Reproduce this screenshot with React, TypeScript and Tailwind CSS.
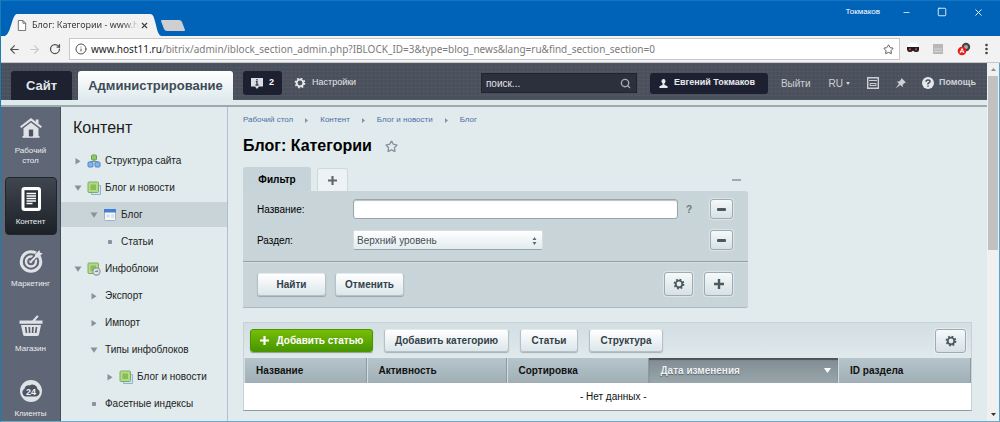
import React from "react";
import { Minus, Square, X, Star, RotateCw, ArrowLeft, ArrowRight, Info, Search } from "lucide-react";

type MenuItem = {
  label: string;
  indent: string;
  marker: "closed" | "open" | "dot";
  icon?: "site" | "block" | "page" | "gear";
  active?: boolean;
};

const menu: MenuItem[] = [
  { label: "Структура сайта", indent: "pl-3", marker: "closed", icon: "site" },
  { label: "Блог и новости", indent: "pl-3", marker: "open", icon: "block" },
  { label: "Блог", indent: "pl-7", marker: "open", icon: "page", active: true },
  { label: "Статьи", indent: "pl-11", marker: "dot" },
  { label: "Инфоблоки", indent: "pl-3", marker: "open", icon: "gear" },
  { label: "Экспорт", indent: "pl-7", marker: "closed" },
  { label: "Импорт", indent: "pl-7", marker: "closed" },
  { label: "Типы инфоблоков", indent: "pl-7", marker: "open" },
  { label: "Блог и новости", indent: "pl-11", marker: "closed", icon: "block" },
  { label: "Фасетные индексы", indent: "pl-7", marker: "dot" },
];

const lightButton =
  "flex items-center justify-center rounded-[3px] border border-[#b4c2c8] border-t-[#e3eaed] bg-linear-to-b from-white to-[#dce6ea] font-bold text-[#32414a] shadow-[0_1px_1px_rgba(80,100,110,0.4)]";
const iconButton =
  "flex items-center justify-center rounded-[3px] border border-[#9dacb2] bg-linear-to-b from-[#f6f9fa] to-[#d7e1e5] text-[#4b5960] shadow-[0_0_1px_1px_rgba(255,255,255,0.4)]";

function Marker({ kind }: { kind: MenuItem["marker"] }) {
  return (
    <svg viewBox="0 0 10 10" className="size-[10px] shrink-0" fill="#85929f" aria-hidden="true">
      {kind === "closed" && <path d="M2.5 2v6.5l5-3.2z" />}
      {kind === "open" && <path d="M1.5 2.5h7L5 7.8z" />}
      {kind === "dot" && <rect x="3" y="3" width="4" height="4" rx="1" />}
    </svg>
  );
}

function GreenBlock() {
  return (
    <>
      <path d="M4.500 4.500h9v9h-9z" fill="#d4e4f7" stroke="#8fb2dd" />
      <rect x="1" y="1" width="10.500" height="10.500" rx="1" fill="#b4d98a" stroke="#7fae5a" />
      <rect x="3.500" y="3.500" width="5.500" height="5.500" fill="#84c052" />
    </>
  );
}

function MenuIcon({ kind }: { kind: NonNullable<MenuItem["icon"]> }) {
  return (
    <svg viewBox="0 0 14 14" className="size-[14px] shrink-0" aria-hidden="true">
      {kind === "site" && (
        <>
          <path d="M7 5v3M3.500 10V7.500h7V10" fill="none" stroke="#7d93a8" />
          <rect x="4.500" y="1" width="5" height="5" rx="1" fill="#93c668" stroke="#69a142" />
          <rect x="1" y="8" width="5" height="5" rx="1" fill="#86b3ea" stroke="#4f83c9" />
          <rect x="8" y="8" width="5" height="5" rx="1" fill="#86b3ea" stroke="#4f83c9" />
        </>
      )}
      {kind === "block" && <GreenBlock />}
      {kind === "page" && (
        <>
          <rect x="1.500" y="1.500" width="11" height="11" rx="1" fill="#f5f7fa" stroke="#9fb0c4" />
          <path d="M1 1h12v3.500H1z" fill="#3f80d8" />
          <path d="M3.500 6.500h3v3h-3z" fill="#d3dae2" />
          <path d="M8 7h3M8 9h3" stroke="#c7d0da" />
        </>
      )}
      {kind === "gear" && (
        <>
          <rect x="1" y="1" width="10.500" height="10.500" rx="1" fill="#b4d98a" stroke="#7fae5a" />
          <rect x="3.500" y="3.500" width="5.500" height="5.500" fill="#84c052" />
          <circle cx="9.500" cy="9.500" r="3.600" fill="#dde2e6" stroke="#8e9ba5" strokeWidth="1.200" />
          <path d="M8 9.500h3M9.500 9.500l1-1.500" stroke="#7a8791" fill="none" />
        </>
      )}
    </svg>
  );
}

function Gear({ className }: { className: string }) {
  return (
    <svg viewBox="0 0 14 14" className={className} fill="none" stroke="currentColor" aria-hidden="true">
      <circle cx="7" cy="7" r="3.900" strokeWidth="2.200" />
      <circle cx="7" cy="7" r="5.400" strokeWidth="1.800" strokeDasharray="2.100 2.141" />
    </svg>
  );
}

function Plus({ className }: { className: string }) {
  return (
    <svg viewBox="0 0 10 10" className={className} stroke="currentColor" strokeWidth="2.400" aria-hidden="true">
      <path d="M5 0v10M0 5h10" />
    </svg>
  );
}

function MinusBar() {
  return (
    <svg viewBox="0 0 9 3" className="h-[3px] w-[9px]" aria-hidden="true">
      <rect width="9" height="3" rx="1" fill="currentColor" />
    </svg>
  );
}

function NavIcon({ kind }: { kind: string }) {
  return (
    <svg viewBox="0 0 24 24" className="size-[24px]" fill="#dfe2e6" aria-hidden="true">
      {kind === "home" && (
        <>
          <path d="M12 2L1 10.500l1.300 1.600L12 4.800l9.700 7.300 1.300-1.600-3.500-2.700V3.500h-2.700v2.200z" />
          <path d="M4.500 12.200L12 6.500l7.500 5.700V21h-5.300v-7.500H9.800V21H4.500z" />
          <path d="M3.500 20h17v1.800h-17z" />
          <path d="M10.300 14h3.400v6.500h-3.400z" fill="#4a5060" />
        </>
      )}
      {kind === "content" && (
        <>
          <rect x="2.500" y="0" width="19.500" height="24" rx="3" fill="#fff" />
          <rect x="5.500" y="3.200" width="13.500" height="17.600" fill="#2b3139" />
          <path d="M7.500 6.500h9.500M7.500 9h9.500M7.500 11.500h9.500M7.500 14h9.500M7.500 16.500h6" stroke="#fff" strokeWidth="1.400" />
        </>
      )}
      {kind === "target" && (
        <>
          <circle cx="12" cy="12.500" r="9.800" fill="none" stroke="#dfe2e6" strokeWidth="3" />
          <circle cx="12" cy="12.500" r="5" fill="none" stroke="#dfe2e6" strokeWidth="2.400" />
          <circle cx="12" cy="12.500" r="1.800" />
          <path d="M12 12.500L20 4" stroke="#596070" strokeWidth="4.500" />
          <path d="M12 12.500L21 3.500" stroke="#dfe2e6" strokeWidth="2" />
          <path d="M16 5.500L20.500 1l.5 2.800 2.700.5-4.500 4.500-3-.5z" />
        </>
      )}
      {kind === "basket" && (
        <>
          <path d="M.5 6.500h12.800L18 1.200l1.700 1.200-3.500 4.100h7.300v3.300H.5z" />
          <path d="M2 11h20l-2 9.500q-.3 1.500-2 1.500H6q-1.700 0-2-1.500z" />
          <path d="M6.700 13l.8 6M10.300 13l.3 6M13.900 13l-.3 6M17.500 13l-.8 6" stroke="#596070" strokeWidth="1.700" />
        </>
      )}
      {kind === "clients" && (
        <>
          <circle cx="12" cy="12" r="11" />
          <path d="M7 17.500a4 4 0 0 1-1.500-7.500 4 4 0 0 1 5-3.500 5 5 0 0 1 8 3.500 4 4 0 0 1-1 7.500z" fill="#4d5462" />
          <text x="12" y="15.500" textAnchor="middle" fontSize="9" fontWeight="700" fill="#f0f2f4" fontFamily="Liberation Sans, sans-serif">24</text>
        </>
      )}
    </svg>
  );
}

const nav = [
  { kind: "home", label: "Рабочий стол" },
  { kind: "content", label: "Контент", active: true },
  { kind: "target", label: "Маркетинг" },
  { kind: "basket", label: "Магазин" },
  { kind: "clients", label: "Клиенты" },
];

function BrowserChrome() {
  return (
    <header className="shrink-0">
      <div className="flex h-9 items-end border-t border-[#1278c4] bg-[#0063b8] pl-1">
        <div className="relative flex h-[22px] w-[156px] items-center pr-3 pl-3 font-['Noto_Sans'] text-[9px] text-[#3c3c3c]">
          <svg viewBox="0 0 156 22" preserveAspectRatio="none" className="absolute inset-0 size-full" aria-hidden="true">
            <path d="M0 22C4 20 5 14 8 5q2-5 4-5h133q3 0 4 4c3 9 3 16 7 18z" fill="#f2f2f2" />
          </svg>
          <svg viewBox="0 0 10 12" className="relative mr-[5px] h-[11px] w-[10px] shrink-0" fill="#fff" stroke="#666" aria-hidden="true">
            <path d="M1 .5h5l3 3v8H1zM6 .5v3h3" />
          </svg>
          <span className="relative mask-r-from-85% whitespace-nowrap">Блог: Категории - www.h</span>
          <button type="button" aria-label="Закрыть вкладку" className="relative ml-auto">
            <X className="size-[9px]" strokeWidth={3} />
          </button>
        </div>
        <button type="button" aria-label="Новая вкладка" className="mb-[5px] h-[11px] w-[24px]">
          <svg viewBox="0 0 24 11" className="size-full" aria-hidden="true">
            <path d="M0 1q0-1 1-1h17q2 0 3 2l3 8q0 1-1 1H6q-2 0-3-2z" fill="#cfcfd1" />
          </svg>
        </button>
        <div className="mb-[18px] ml-auto flex items-center text-white">
          <span className="mr-[22px] text-[8px]">Токмаков</span>
          <button type="button" aria-label="Свернуть" className="mr-[26px]"><Minus className="size-[9px]" /></button>
          <button type="button" aria-label="Развернуть" className="mr-[26px]"><Square className="size-[10px]" /></button>
          <button type="button" aria-label="Закрыть" className="mr-4"><X className="size-[11px]" /></button>
        </div>
      </div>
      <div className="flex h-[27px] items-center border-b border-[#c4c6c8] bg-[#f2f2f2] pr-3 pl-[7px] text-[#505050]">
        <button type="button" aria-label="Назад"><ArrowLeft className="size-[13px]" /></button>
        <button type="button" aria-label="Вперёд" className="ml-[7px] text-[#c8c8c8]"><ArrowRight className="size-[13px]" /></button>
        <button type="button" aria-label="Обновить" className="ml-2"><RotateCw className="size-[12px]" strokeWidth={2.5} /></button>
        <label className="ml-2 flex h-[22px] min-w-0 flex-1 items-center border border-[#c8c8c8] bg-white pr-[5px] pl-[5px] font-['Noto_Sans'] text-[10px]">
          <Info className="mr-1 size-[12px] shrink-0" />
          <span className="min-w-0 flex-1 overflow-hidden whitespace-nowrap text-[#7b7b7b]">
            <span className="text-[#222]">www.host11.ru</span>/bitrix/admin/iblock_section_admin.php?IBLOCK_ID=3&amp;type=blog_news&amp;lang=ru&amp;find_section_section=0
          </span>
          <Star className="size-[11px]" />
        </label>
        <div className="ml-[7px] flex items-center gap-[14px]">
          <svg viewBox="0 0 12 12" className="size-3" aria-hidden="true">
            <path d="M1 1q5-2 10 0v4H1z" fill="#fff" />
            <path d="M0 4h12v2.500q0 2.500-2.500 2.500T6 7.500Q5 9 2.700 9T0 6.500z" fill="#251b1c" />
            <circle cx="3" cy="6.300" r="1.100" fill="#c94b4b" /><circle cx="9" cy="6.300" r="1.100" fill="#c94b4b" />
          </svg>
          <svg viewBox="0 0 10 10" className="size-[10px]" aria-hidden="true">
            <path d="M0 0h10v10H0z" fill="#b8b8b8" />
            <path d="M1 5h8M1 7.500h8" stroke="#d5d5d5" />
          </svg>
          <svg viewBox="0 0 14 14" className="size-[14px]" aria-hidden="true">
            <circle cx="9" cy="5" r="4.200" fill="#454545" /><circle cx="9" cy="5" r="2" fill="#aaa" />
            <circle cx="5" cy="9" r="4.300" fill="#ed1c16" />
            <path d="M3 11l2-4.500L7 11M3.700 9.700h2.600" fill="none" stroke="#fff" />
          </svg>
          <svg viewBox="0 0 3 12" className="h-3 w-[3px]" fill="#444" aria-hidden="true">
            <circle cx="1.500" cy="2" r="1.300" /><circle cx="1.500" cy="6" r="1.300" /><circle cx="1.500" cy="10" r="1.300" />
          </svg>
        </div>
      </div>
    </header>
  );
}

function TopBar() {
  return (
    <div className="flex h-[37px] shrink-0 items-end bg-[#4b525e] bg-[repeating-linear-gradient(0deg,rgba(255,255,255,0.03)_0_1px,transparent_1px_4px),repeating-linear-gradient(90deg,rgba(0,0,0,0.05)_0_1px,transparent_1px_4px)] pl-[10px] text-[10px] text-[#ccd1d6]">
      <a href="#site" className="flex h-[29px] w-[61px] items-center justify-center rounded-t-[3px] bg-[#1d2130] text-[13px] font-bold text-[#e2e6ea]">Сайт</a>
      <a href="#admin" className="ml-[6px] flex h-[29px] w-[155px] items-center justify-center rounded-t-[3px] bg-linear-to-b from-white to-[#dfeaed] text-[13px] font-bold text-[#404a57]">Администрирование</a>
      <div className="flex h-full min-w-0 flex-1 items-center pt-[3px]">
        <button type="button" aria-label="Уведомления: 2" className="ml-[10px] flex h-[24px] w-[39px] items-center justify-center gap-[6px] rounded-[3px] bg-[#1c2030] text-[9px] font-bold text-white">
          <svg viewBox="0 0 12 12" className="size-3" aria-hidden="true">
            <path d="M0 1h12v8.500H8L6 12 4 9.500H0z" fill="#dbdfe3" />
            <path d="M6 2v1.500M4.800 4.600H6V8M4.500 8h3" stroke="#333a48" strokeWidth="1.300" fill="none" />
          </svg>
          2
        </button>
        <a href="#settings" className="ml-[12px] flex items-center gap-[6px] text-[9px] text-[#e4e7ea]">
          <Gear className="size-[12px]" />Настройки
        </a>
        <label className="ml-auto flex h-[20px] w-[156px] items-center border border-[#20242e] bg-[#2b303c] px-1">
          <input aria-label="Поиск" placeholder="поиск..." className="min-w-0 flex-1 bg-transparent text-[10px] outline-none placeholder:text-[#e2e5e8]" />
          <Search className="mr-px size-[11px] text-[#a5abb2]" strokeWidth={3} />
        </label>
        <button type="button" className="ml-[13px] flex h-[21px] w-[118px] items-center gap-[6px] rounded-[3px] bg-[#1c2030] pl-[9px] text-[9px] font-bold whitespace-nowrap text-[#e8ebee]">
          <svg viewBox="0 0 9 10" className="h-[9px] w-[9px] shrink-0" fill="currentColor" aria-hidden="true">
            <ellipse cx="4.500" cy="2.500" rx="2.200" ry="2.500" /><path d="M3.500 4h2v2.500L9 8v2H0V8l3.500-1.500z" />
          </svg>
          Евгений Токмаков
        </button>
        <a href="#logout" className="ml-[13px]">Выйти</a>
        <button type="button" className="ml-[18px] flex items-center gap-[3px]">
          RU
          <svg viewBox="0 0 4 3" className="h-[3px] w-[4px]" fill="currentColor" aria-hidden="true"><path d="M0 0h4L2 3z" /></svg>
        </button>
        <button type="button" aria-label="Панель" className="ml-[17px]">
          <svg viewBox="0 0 12 12" className="size-3" fill="none" stroke="currentColor" aria-hidden="true">
            <path d="M.7.700h10.600v10.600H.7z" strokeWidth="1.400" /><path d="M2 3.500h8M3 6.500h6v2H3z" />
          </svg>
        </button>
        <button type="button" aria-label="Закрепить" className="ml-[16px]">
          <svg viewBox="0 0 11 11" className="size-[11px]" fill="currentColor" aria-hidden="true">
            <path d="M6.500 0L11 4.500l-1.500.5-1.800 1.800v2.400L5.300 6.900.5 10.500 4 5.700 1.800 3.500h2.400L6 1.700z" />
          </svg>
        </button>
        <a href="#help" className="mr-[11px] ml-[16px] flex items-center gap-[5px] text-[9px] font-bold">
          <svg viewBox="0 0 12 12" className="size-3" aria-hidden="true">
            <circle cx="6" cy="6" r="6" fill="#e5e8eb" />
            <path d="M4 4.800Q4 3 6 3t2 1.600Q8 5.500 6 6.500v1M6 8.500v1.300" fill="none" stroke="#474e5a" strokeWidth="1.500" />
          </svg>
          Помощь
        </a>
      </div>
    </div>
  );
}

function SideNav() {
  return (
    <nav className="flex w-[60px] shrink-0 flex-col items-center border-r border-[#464c59] bg-[#5f6675] pt-[5px] text-center text-[8px] leading-[10px] text-[#eceef0]">
      {nav.map((n) => (
        <a
          key={n.label}
          href={"#" + n.kind}
          className={
            n.active
              ? "mb-[10px] flex h-[58px] w-[52px] shrink-0 flex-col items-center gap-[6px] rounded-[4px] border border-[#22262c] bg-linear-to-b from-[#40464f] to-[#1d2127] pt-[9px]"
              : "mb-[7px] flex h-[58px] w-[52px] shrink-0 flex-col items-center gap-[6px] px-[5px] pt-1"
          }
        >
          <NavIcon kind={n.kind} />
          {n.label}
        </a>
      ))}
    </nav>
  );
}

function ContentMenu() {
  return (
    <aside className="w-[167px] shrink-0 border-r border-[#aebfd2] pt-[10px]">
      <h2 className="mb-2 pl-3 text-[16px] leading-[22px] text-[#1c1c1c]">Контент</h2>
      <ul>
        {menu.map((m, i) => (
          <li key={i} className="flex h-[27px] items-center">
            <a
              href={"#menu-" + i}
              className={
                (m.active ? "bg-[#c9d4d9] " : "") +
                m.indent +
                " flex h-[25px] w-full items-center text-[10px] whitespace-nowrap text-[#222]"
              }
            >
              <Marker kind={m.marker} />
              {m.icon && <span className="ml-1"><MenuIcon kind={m.icon} /></span>}
              <span className={m.icon ? "ml-1" : "ml-[6px]"}>{m.label}</span>
            </a>
          </li>
        ))}
      </ul>
    </aside>
  );
}

function Filter() {
  return (
    <section className="w-[505px] max-w-full text-[10px]">
      <div className="flex h-6 items-end">
        <button type="button" className="h-6 w-[68px] rounded-t-[3px] bg-[#c6d3d8] font-bold text-black">Фильтр</button>
        <button type="button" aria-label="Добавить вкладку" className="ml-[6px] flex h-[23px] w-[31px] items-center justify-center rounded-t-[3px] border border-b-0 border-[#cfd9dd] bg-[#edf3f5] text-[#5d686f]">
          <Plus className="size-[9px]" />
        </button>
        <button type="button" aria-label="Свернуть фильтр" className="mr-[7px] mb-[10px] ml-auto h-[2px] w-[9px] bg-[#9daab0]" />
      </div>
      <div className="rounded-r-[3px] border-b border-[#aab8be] bg-[#c5d2d7] bg-[repeating-conic-gradient(rgba(255,255,255,0.1)_0_25%,transparent_0_50%)] bg-[length:2px_2px]">
        <div className="flex flex-col gap-[11px] pt-2 pr-[15px] pb-[11px] pl-[14px]">
          <div className="flex h-5 items-center">
            <label htmlFor="name" className="w-24">Название:</label>
            <input id="name" className="h-5 min-w-0 flex-1 rounded-[3px] border border-[#98a7ae] bg-white px-1 shadow-[inset_0_1px_1px_#b6c1c6]" />
            <span className="w-[22px] text-center font-bold text-[#6c7a82]">?</span>
            <button type="button" aria-label="Убрать название" className={iconButton + " ml-[10px] h-5 w-[23px]"}><MinusBar /></button>
          </div>
          <div className="flex h-5 items-center">
            <label htmlFor="section" className="w-24">Раздел:</label>
            <div className="relative">
              <select id="section" className="h-5 w-[190px] appearance-none rounded-[2px] border border-[#d4dde1] border-b-[#96a5ac] bg-linear-to-b from-white to-[#e3ebee] pl-[3px] text-[#444e54]">
                <option>Верхний уровень</option>
              </select>
              <svg viewBox="0 0 5 8" className="pointer-events-none absolute top-[7px] right-[6px] h-2 w-[5px]" fill="#606c73" aria-hidden="true">
                <path d="M.5 3h4l-2-3zM.5 5h4l-2 3z" />
              </svg>
            </div>
            <button type="button" aria-label="Убрать раздел" className={iconButton + " ml-auto h-5 w-[23px]"}><MinusBar /></button>
          </div>
        </div>
        <div className="flex items-center gap-[9px] border-t border-[#93a1a7] pt-[10px] pr-[15px] pb-[11px] pl-[14px] shadow-[inset_0_1px_0_#d6e0e4]">
          <button type="button" className={lightButton + " h-[23px] w-[69px]"}>Найти</button>
          <button type="button" className={lightButton + " h-[23px] w-[69px]"}>Отменить</button>
          <button type="button" aria-label="Настройки фильтра" className={iconButton + " ml-auto h-6 w-[29px]"}><Gear className="size-[12px]" /></button>
          <button type="button" aria-label="Добавить условие" className={iconButton + " ml-[2px] h-6 w-[29px]"}><Plus className="size-[10px]" /></button>
        </div>
      </div>
    </section>
  );
}

function SectionsList() {
  const cell = "h-[25px] border-r border-[#8d9ba1] bg-linear-to-b from-[#b6c5cb] to-[#9fafb5] pl-3 text-left shadow-[inset_1px_0_0_#d4dde0]";
  return (
    <section className="mt-[14px] mr-[15px] border border-[#c6d2d6] border-b-[#8f9ca1] bg-[#dce6e9] text-[10px]">
      <div className="flex h-[35px] items-center gap-[11px] bg-linear-to-b from-[#d3dee2] to-[#e0e9ec] pr-[5px] pl-[6px]">
        <button type="button" className="flex h-[23px] w-[123px] items-center justify-center gap-[8px] rounded-[3px] border border-[#4d9500] bg-linear-to-b from-[#78bd08] to-[#479600] font-bold text-white shadow-[0_1px_1px_rgba(60,90,40,0.5)]">
          <Plus className="size-[9px]" />Добавить статью
        </button>
        <button type="button" className={lightButton + " h-[23px] w-[125px]"}>Добавить категорию</button>
        <button type="button" className={lightButton + " h-[23px] w-[58px]"}>Статьи</button>
        <button type="button" className={lightButton + " h-[23px] w-[74px]"}>Структура</button>
        <button type="button" aria-label="Настройки списка" className={iconButton + " ml-auto h-6 w-[31px]"}><Gear className="size-[12px]" /></button>
      </div>
      <table className="w-full table-fixed border-collapse text-[#111]">
        <thead>
          <tr>
            <th className={cell + " w-[122px]"}>Название</th>
            <th className={cell + " w-[140px]"}>Активность</th>
            <th className={cell + " w-[142px]"}>Сортировка</th>
            <th className="h-[25px] w-[190px] bg-linear-to-b from-[#7f8b91] to-[#98a6ac] px-3 text-left text-[#eef1f3] shadow-[inset_0_2px_1px_#4b5459] [text-shadow:0_1px_1px_#566066]" aria-sort="descending">
              <span className="flex items-center justify-between">
                Дата изменения
                <svg viewBox="0 0 7 5" className="mr-[-5px] h-[5px] w-[7px]" fill="#fff" aria-hidden="true"><path d="M0 0h7L3.500 5z" /></svg>
              </span>
            </th>
            <th className={cell}>ID раздела</th>
          </tr>
        </thead>
        <tbody>
          <tr><td colSpan={5} className="h-[27px] bg-white pl-3 text-center">- Нет данных -</td></tr>
        </tbody>
      </table>
    </section>
  );
}

const crumbs = ["Рабочий стол", "Контент", "Блог и новости", "Блог"];

export default function App() {
  return (
    <div className="flex h-screen flex-col overflow-hidden border-b border-l border-b-[#6da9cb] border-l-[#1b7eb2] bg-[#e1ebed] font-['Liberation_Sans',Arial,sans-serif]">
      <BrowserChrome />
      <div className="flex min-h-0 flex-1">
        <div className="flex min-w-0 flex-1 flex-col">
          <TopBar />
          <div className="h-[7px] shrink-0 border-b-2 border-[#9fa9ad] bg-[#dfeaed]" />
          <div className="flex min-h-0 flex-1 overflow-hidden">
            <SideNav />
            <ContentMenu />
            <main className="min-w-0 flex-1 pl-[15px]">
              <nav aria-label="Навигация" className="flex items-center pt-2 text-[8px] leading-[10px] text-[#4a6fa8]">
                {crumbs.map((c, i) => (
                  <React.Fragment key={c}>
                    {i > 0 && (
                      <svg viewBox="0 0 3 5" className="mx-3 h-[5px] w-[3px]" fill="#8793a3" aria-hidden="true"><path d="M0 0l3 2.500L0 5z" /></svg>
                    )}
                    <a href={"#crumb-" + i}>{c}</a>
                  </React.Fragment>
                ))}
              </nav>
              <div className="flex items-center gap-[13px] pt-[10px] pb-[10px]">
                <h1 className="text-[16px] leading-[22px] font-bold text-black">Блог: Категории</h1>
                <button type="button" aria-label="В избранное"><Star className="size-[13px] text-[#8793a0]" strokeWidth={2.5} /></button>
              </div>
              <Filter />
              <SectionsList />
            </main>
          </div>
        </div>
        <div className="flex w-[13px] shrink-0 flex-col items-center border-r border-r-[#5ba3d0] bg-[#f0f0f0]" aria-hidden="true">
          <svg viewBox="0 0 5 3" className="mt-[5px] mb-[5px] h-[3px] w-[5px]" fill="#8c8c8c"><path d="M0 3h5L2.500 0z" /></svg>
          <div className="h-[174px] w-[10px] bg-[#c1c1c1]" />
          <svg viewBox="0 0 5 3" className="mt-auto mb-[5px] h-[3px] w-[5px]" fill="#333"><path d="M0 0h5L2.500 3z" /></svg>
        </div>
      </div>
    </div>
  );
}
